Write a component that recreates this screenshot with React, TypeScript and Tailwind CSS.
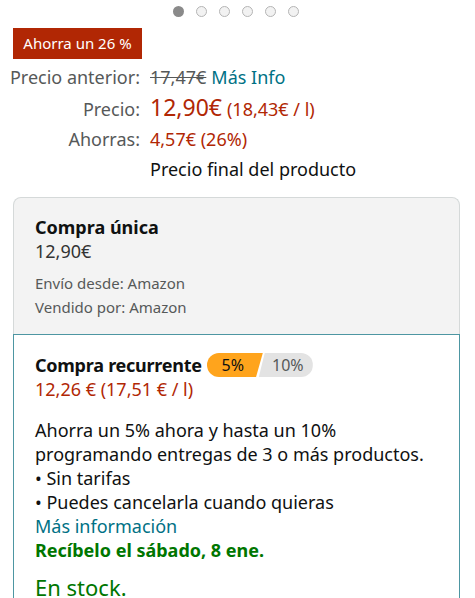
import React from 'react';

const Dots = () => (
  <div className="flex justify-center gap-[12px] pt-[6px] h-[22px] pr-[4px]">
    {[0, 1, 2, 3, 4, 5].map((i) => (
      <span
        key={i}
        className={
          i === 0
            ? 'w-[11px] h-[11px] rounded-full bg-[#8a8a8a]'
            : 'w-[11px] h-[11px] rounded-full bg-[#f2f2f2] border border-[#b5b5b5]'
        }
      />
    ))}
  </div>
);

const PriceRow: React.FC<{ label?: string; children: React.ReactNode }> = ({ label, children }) => (
  <div className="flex items-baseline">
    <div className="w-[150px] text-right text-[18px] text-[#565959] pr-[10px] shrink-0">{label}</div>
    <div className="flex items-baseline">{children}</div>
  </div>
);

export default function App() {
  return (
    <div className="w-[475px] h-[598px] overflow-hidden bg-white text-[#0f1111]" style={{ fontFamily: '"Noto Sans", Arial, sans-serif' }}>
      <Dots />

      <div className="px-[13px] mt-[6px]">
        <div className="inline-flex items-center h-[31px] w-[129px] justify-center bg-[#b12704] text-white text-[15px]">
          Ahorra un 26 %
        </div>
      </div>

      <div className="mt-[3px] leading-[30px]">
        <PriceRow label="Precio anterior:">
          <span className="text-[18px] text-[#565959] line-through">17,47€</span>
          <span className="text-[18px] text-[#007185] ml-[5px]">Más Info</span>
        </PriceRow>
        <PriceRow label="Precio:">
          <span className="text-[23px] text-[#b12704]">12,90€</span>
          <span className="text-[18px] text-[#b12704] ml-[5px]">(18,43€ / l)</span>
        </PriceRow>
        <PriceRow label="Ahorras:">
          <span className="text-[18px] text-[#b12704]">4,57€ (26%)</span>
        </PriceRow>
        <PriceRow>
          <span className="text-[18px] text-[#0f1111]">Precio final del producto</span>
        </PriceRow>
      </div>

      <div className="ml-[13px] mr-[15px] mt-[13px]">
        <div className="bg-[#f3f3f3] border border-[#d5d9d9] border-b-0 rounded-t-[8px] px-[21px] pt-[17px] pb-[15px]">
          <div className="text-[18px] font-bold leading-[24px]">Compra única</div>
          <div className="text-[18px] text-[#333] leading-[24px]">12,90€</div>
          <div className="mt-[8px] text-[15px] text-[#565959] leading-[24px]">Envío desde: Amazon</div>
          <div className="text-[15px] text-[#565959] leading-[24px]">Vendido por: Amazon</div>
        </div>
        <div className="border border-[#4d96a2] px-[21px] pt-[18px] pb-[20px] h-[300px]">
          <div className="flex items-center">
            <span className="text-[18px] font-bold leading-[24px] tracking-[-0.25px]">Compra recurrente</span>
            <div className="flex ml-[5px] text-[16px] leading-[24px]">
              <span className="w-[56px] text-center pr-[4px] bg-[#ffa41c] text-[#0f1111] rounded-l-full [clip-path:polygon(0_0,100%_0,88%_100%,0_100%)]">5%</span>
              <span className="w-[54px] text-center pl-[4px] bg-[#e3e3e3] text-[#565959] rounded-r-full -ml-[4px] [clip-path:polygon(11%_0,100%_0,100%_100%,0_100%)]">10%</span>
            </div>
          </div>
          <div className="text-[18px] text-[#b12704] leading-[24px]">12,26 € (17,51 € / l)</div>
          <div className="mt-[17px] text-[18px] leading-[24px]">
            <div>Ahorra un 5% ahora y hasta un 10% programando entregas de 3 o más productos.</div>
            <div>• Sin tarifas</div>
            <div>• Puedes cancelarla cuando quieras</div>
            <div className="text-[#007185]">Más información</div>
            <div className="font-bold text-[#007600]">Recíbelo el sábado, 8 ene.</div>
            <div className="mt-[10px] text-[22px] text-[#007600] leading-[30px]">En stock.</div>
          </div>
        </div>
      </div>
    </div>
  );
}
